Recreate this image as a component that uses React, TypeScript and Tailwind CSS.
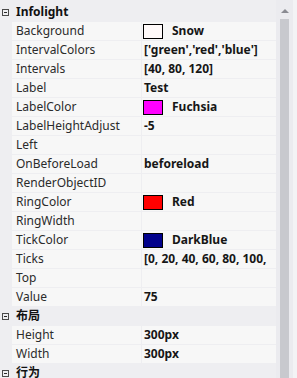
import React from "react";

type Row = { name: string; value?: string; color?: string };

const infolight: Row[] = [
  { name: "Background", value: "Snow", color: "#fffafa" },
  { name: "IntervalColors", value: "['green','red','blue']" },
  { name: "Intervals", value: "[40, 80, 120]" },
  { name: "Label", value: "Test" },
  { name: "LabelColor", value: "Fuchsia", color: "#ff00ff" },
  { name: "LabelHeightAdjust", value: "-5" },
  { name: "Left" },
  { name: "OnBeforeLoad", value: "beforeload" },
  { name: "RenderObjectID" },
  { name: "RingColor", value: "Red", color: "#ff0000" },
  { name: "RingWidth" },
  { name: "TickColor", value: "DarkBlue", color: "#00008b" },
  { name: "Ticks", value: "[0, 20, 40, 60, 80, 100," },
  { name: "Top" },
  { name: "Value", value: "75" },
];

const layout: Row[] = [
  { name: "Height", value: "300px" },
  { name: "Width", value: "300px" },
];

const Collapse = () => (
  <span className="flex h-[7px] w-[7px] items-center justify-center border border-[#4a4a4a]">
    <span className="h-px w-[3px] bg-[#2a2a2a]" />
  </span>
);

const Category = ({ title }: { title: string }) => (
  <div className="flex h-[18px] shrink-0 items-center">
    <div className="flex w-[12px] justify-start pl-[2px]">
      <Collapse />
    </div>
    <span className="pl-[4px] text-[12px] font-bold text-[#111]">{title}</span>
  </div>
);

const PropRow = ({ row }: { row: Row }) => (
  <div className="flex h-[18px] shrink-0 pl-[12px]">
    <div className="flex w-[129px] items-center bg-[#f7f7f7] pl-[4px] text-[12px] text-[#2b2b2b]">
      {row.name}
    </div>
    <div className="ml-px flex min-w-0 flex-1 items-center overflow-hidden whitespace-nowrap bg-[#f7f7f7] text-[12px] font-bold text-[#161616]">
      {row.color ? (
        <>
          <span
            className="ml-px h-[15px] w-[20px] shrink-0 border border-black"
            style={{ backgroundColor: row.color }}
          />
          <span className="pl-[9px]">{row.value}</span>
        </>
      ) : (
        <span className="pl-[2px]">{row.value}</span>
      )}
    </div>
  </div>
);

export default function App() {
  return (
    <div
      className="flex h-[378px] w-[297px] overflow-hidden bg-[#eeeef1]"
      style={{ fontFamily: '"Noto Sans", "Noto Sans CJK SC", sans-serif' }}
    >
      <div className="flex w-[276px] flex-col gap-px pt-[3px]">
        <Category title="Infolight" />
        {infolight.map((r) => (
          <PropRow key={r.name} row={r} />
        ))}
        <Category title="布局" />
        {layout.map((r) => (
          <PropRow key={r.name} row={r} />
        ))}
        <Category title="行为" />
      </div>
      <div className="flex w-[21px] bg-[#ebebef]">
        <div className="ml-[4px] flex w-[9px] flex-col items-center">
          <div className="mt-[9px] h-0 w-0 border-x-[4px] border-b-[4px] border-x-transparent border-b-[#8a8b92]" />
          <div className="mt-[6px] w-[9px] flex-1 bg-[#c8c9ce]" />
        </div>
        <div className="ml-[4px] w-[4px] bg-[#f3f3f5]" />
      </div>
    </div>
  );
}
